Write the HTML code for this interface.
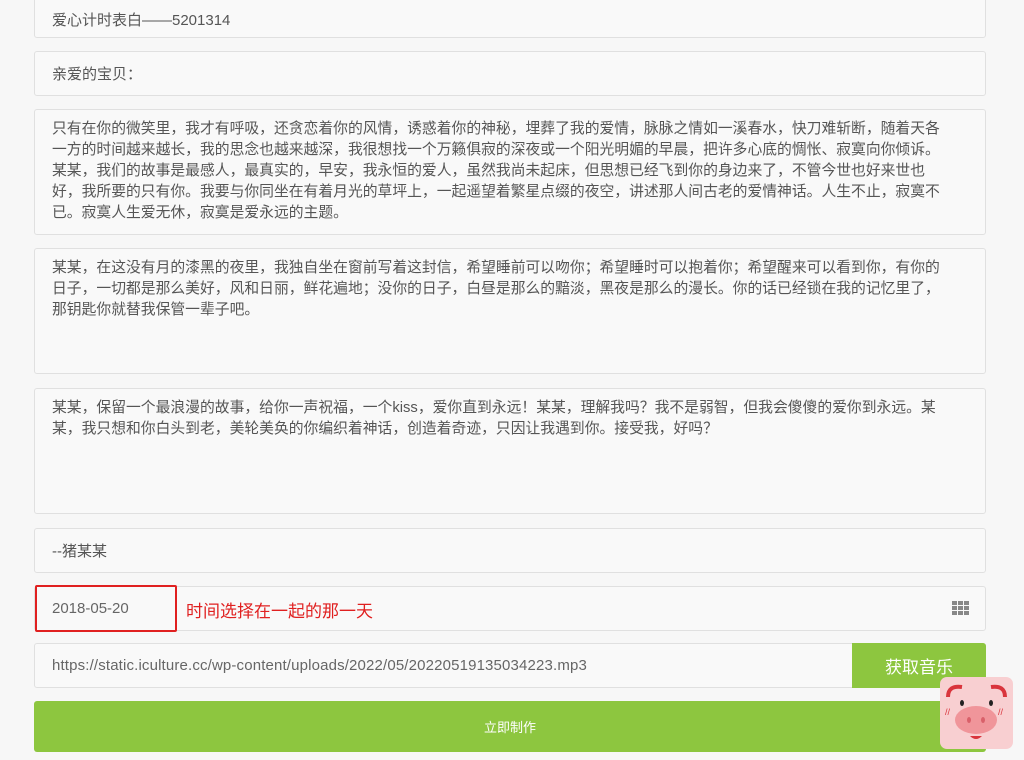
<!DOCTYPE html>
<html><head><meta charset="utf-8"><style>
body{margin:0;width:1024px;height:760px;background:#f7f7f7;overflow:hidden;position:relative;font-family:"Liberation Sans","Noto Sans CJK SC",sans-serif;font-size:15px;color:#555}
.b{position:absolute;left:34px;width:952px;background:#f9f9f9;border:1px solid #e0e0e0;border-radius:3px;box-sizing:border-box}
.t{padding:9px 35px 8px 17px;line-height:21px;font-size:14.8px}
.s{padding:0 17px;display:flex;align-items:center}
</style></head><body>
<div class="b s" style="top:-8px;height:46px;padding-top:8px">爱心计时表白——5201314</div>
<div class="b s" style="top:51px;height:45px">亲爱的宝贝：</div>
<div class="b t" style="top:109px;height:126px">只有在你的微笑里，我才有呼吸，还贪恋着你的风情，诱惑着你的神秘，埋葬了我的爱情，脉脉之情如一溪春水，快刀难斩断，随着天各一方的时间越来越长，我的思念也越来越深，我很想找一个万籁俱寂的深夜或一个阳光明媚的早晨，把许多心底的惆怅、寂寞向你倾诉。某某，我们的故事是最感人，最真实的，早安，我永恒的爱人，虽然我尚未起床，但思想已经飞到你的身边来了，不管今世也好来世也好，我所要的只有你。我要与你同坐在有着月光的草坪上，一起遥望着繁星点缀的夜空，讲述那人间古老的爱情神话。人生不止，寂寞不已。寂寞人生爱无休，寂寞是爱永远的主题。</div>
<div class="b t" style="top:248px;height:126px">某某，在这没有月的漆黑的夜里，我独自坐在窗前写着这封信，希望睡前可以吻你；希望睡时可以抱着你；希望醒来可以看到你，有你的日子，一切都是那么美好，风和日丽，鲜花遍地；没你的日子，白昼是那么的黯淡，黑夜是那么的漫长。你的话已经锁在我的记忆里了，那钥匙你就替我保管一辈子吧。</div>
<div class="b t" style="top:388px;height:126px">某某，保留一个最浪漫的故事，给你一声祝福，一个kiss，爱你直到永远！某某，理解我吗？我不是弱智，但我会傻傻的爱你到永远。某某，我只想和你白头到老，美轮美奂的你编织着神话，创造着奇迹，只因让我遇到你。接受我，好吗？</div>
<div class="b s" style="top:528px;height:45px">--猪某某</div>
<div class="b s" style="top:586px;height:45px;color:#666">2018-05-20<span style="color:#e02020;font-size:17px;position:absolute;left:151px;top:10px">时间选择在一起的那一天</span>
<svg style="position:absolute;right:15px;top:14px" width="18" height="15"><g fill="#888"><rect x="0" y="0" width="5" height="4"/><rect x="6" y="0" width="5" height="4"/><rect x="12" y="0" width="5" height="4"/><rect x="0" y="5" width="5" height="4"/><rect x="6" y="5" width="5" height="4"/><rect x="12" y="5" width="5" height="4"/><rect x="0" y="10" width="5" height="4"/><rect x="6" y="10" width="5" height="4"/><rect x="12" y="10" width="5" height="4"/></g></svg></div>
<div style="position:absolute;left:35px;top:585px;width:138px;height:43px;border:2px solid #e02020;border-radius:2px"></div>
<div class="b s" style="top:643px;height:45px;color:#666;letter-spacing:0.15px">https://static.iculture.cc/wp-content/uploads/2022/05/20220519135034223.mp3</div>
<div style="position:absolute;left:852px;top:643px;width:134px;height:45px;background:#8dc63f;color:#fff;font-size:17px;display:flex;align-items:center;justify-content:center;border-radius:0 3px 3px 0">获取音乐</div>
<div style="position:absolute;left:34px;top:701px;width:952px;height:51px;background:#8dc63f;color:#fff;font-size:13px;display:flex;align-items:center;justify-content:center;border-radius:3px">立即制作</div>
<svg style="position:absolute;left:940px;top:677px" width="73" height="72" viewBox="0 0 73 72">
<rect x="0" y="0" width="73" height="72" rx="7" fill="#f8cfd1"/>
<path d="M8 20 Q8 8 22 10" stroke="#d9343c" stroke-width="4" fill="none"/>
<path d="M65 20 Q65 8 51 10" stroke="#d9343c" stroke-width="4" fill="none"/>
<ellipse cx="22" cy="26" rx="2" ry="3" fill="#222"/><ellipse cx="51" cy="26" rx="2" ry="3" fill="#222"/>
<ellipse cx="36" cy="43" rx="21" ry="14" fill="#f0959a"/>
<ellipse cx="29" cy="43" rx="2" ry="3" fill="#d9606a"/><ellipse cx="43" cy="43" rx="2" ry="3" fill="#d9606a"/>
<path d="M30 59 Q36 65 42 59 Z" fill="#d9343c"/>
<text x="5" y="38" font-size="9" fill="#d9343c">//</text><text x="58" y="38" font-size="9" fill="#d9343c">//</text>
</svg>
</body></html>
